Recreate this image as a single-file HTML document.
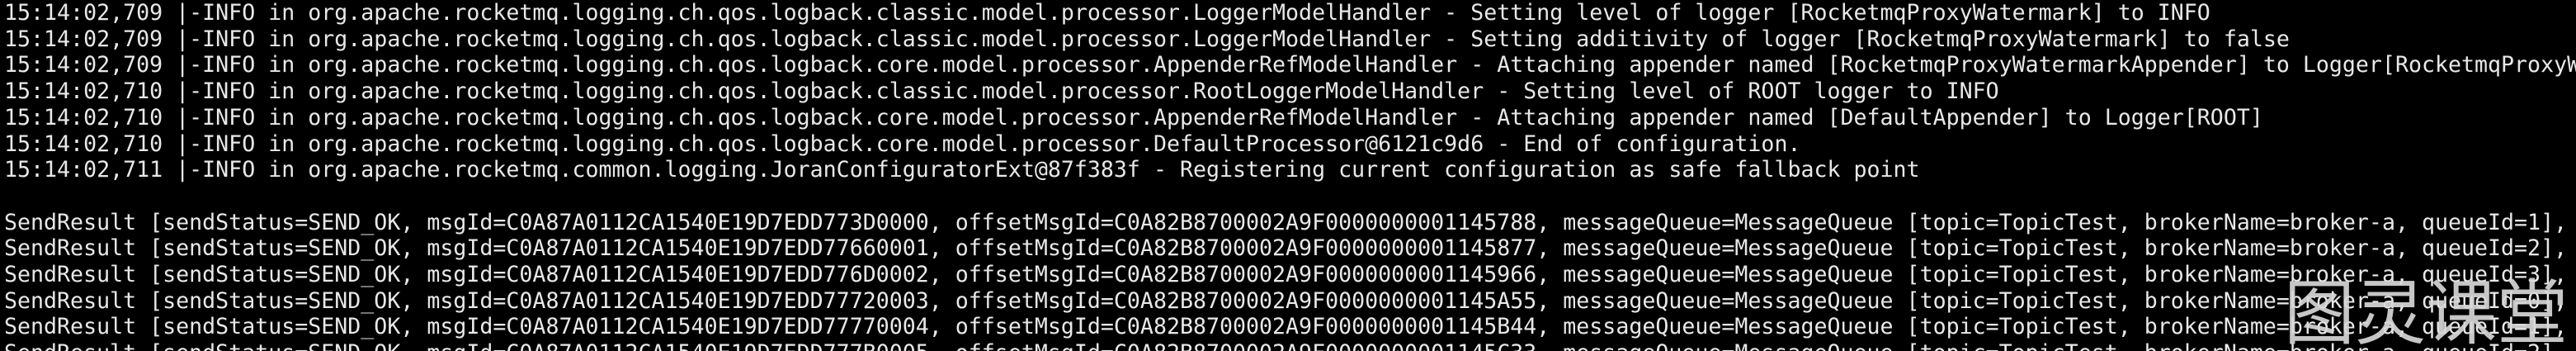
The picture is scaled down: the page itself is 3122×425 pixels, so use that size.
<!DOCTYPE html>
<html><head><meta charset="utf-8"><style>
html,body{margin:0;padding:0;background:#000;width:3122px;height:425px;overflow:hidden;position:relative}
pre{margin:0;padding:0 0 0 5px;width:3117px;height:425px;overflow:hidden;font-family:"DejaVu Sans Mono","Liberation Mono",monospace;font-size:26.6px;line-height:31.7px;color:#e8e8e8;white-space:pre}
.wm{position:absolute;left:2768px;top:322px;font-family:"Noto Sans CJK SC","WenQuanYi Zen Hei",sans-serif;font-size:86px;line-height:100px;color:rgba(215,215,215,0.92);white-space:nowrap}
</style></head><body>
<pre>15:14:02,709 |-INFO in org.apache.rocketmq.logging.ch.qos.logback.classic.model.processor.LoggerModelHandler - Setting level of logger [RocketmqProxyWatermark] to INFO
15:14:02,709 |-INFO in org.apache.rocketmq.logging.ch.qos.logback.classic.model.processor.LoggerModelHandler - Setting additivity of logger [RocketmqProxyWatermark] to false
15:14:02,709 |-INFO in org.apache.rocketmq.logging.ch.qos.logback.core.model.processor.AppenderRefModelHandler - Attaching appender named [RocketmqProxyWatermarkAppender] to Logger[RocketmqProxyWatermark]
15:14:02,710 |-INFO in org.apache.rocketmq.logging.ch.qos.logback.classic.model.processor.RootLoggerModelHandler - Setting level of ROOT logger to INFO
15:14:02,710 |-INFO in org.apache.rocketmq.logging.ch.qos.logback.core.model.processor.AppenderRefModelHandler - Attaching appender named [DefaultAppender] to Logger[ROOT]
15:14:02,710 |-INFO in org.apache.rocketmq.logging.ch.qos.logback.core.model.processor.DefaultProcessor@6121c9d6 - End of configuration.
15:14:02,711 |-INFO in org.apache.rocketmq.common.logging.JoranConfiguratorExt@87f383f - Registering current configuration as safe fallback point

SendResult [sendStatus=SEND_OK, msgId=C0A87A0112CA1540E19D7EDD773D0000, offsetMsgId=C0A82B8700002A9F0000000001145788, messageQueue=MessageQueue [topic=TopicTest, brokerName=broker-a, queueId=1], queueOffset=0]
SendResult [sendStatus=SEND_OK, msgId=C0A87A0112CA1540E19D7EDD77660001, offsetMsgId=C0A82B8700002A9F0000000001145877, messageQueue=MessageQueue [topic=TopicTest, brokerName=broker-a, queueId=2], queueOffset=0]
SendResult [sendStatus=SEND_OK, msgId=C0A87A0112CA1540E19D7EDD776D0002, offsetMsgId=C0A82B8700002A9F0000000001145966, messageQueue=MessageQueue [topic=TopicTest, brokerName=broker-a, queueId=3], queueOffset=0]
SendResult [sendStatus=SEND_OK, msgId=C0A87A0112CA1540E19D7EDD77720003, offsetMsgId=C0A82B8700002A9F0000000001145A55, messageQueue=MessageQueue [topic=TopicTest, brokerName=broker-a, queueId=0], queueOffset=0]
SendResult [sendStatus=SEND_OK, msgId=C0A87A0112CA1540E19D7EDD77770004, offsetMsgId=C0A82B8700002A9F0000000001145B44, messageQueue=MessageQueue [topic=TopicTest, brokerName=broker-a, queueId=1], queueOffset=1]
SendResult [sendStatus=SEND_OK, msgId=C0A87A0112CA1540E19D7EDD777B0005, offsetMsgId=C0A82B8700002A9F0000000001145C33, messageQueue=MessageQueue [topic=TopicTest, brokerName=broker-a, queueId=2], queueOffset=1]</pre>
<div class="wm">图灵课堂</div>
</body></html>
